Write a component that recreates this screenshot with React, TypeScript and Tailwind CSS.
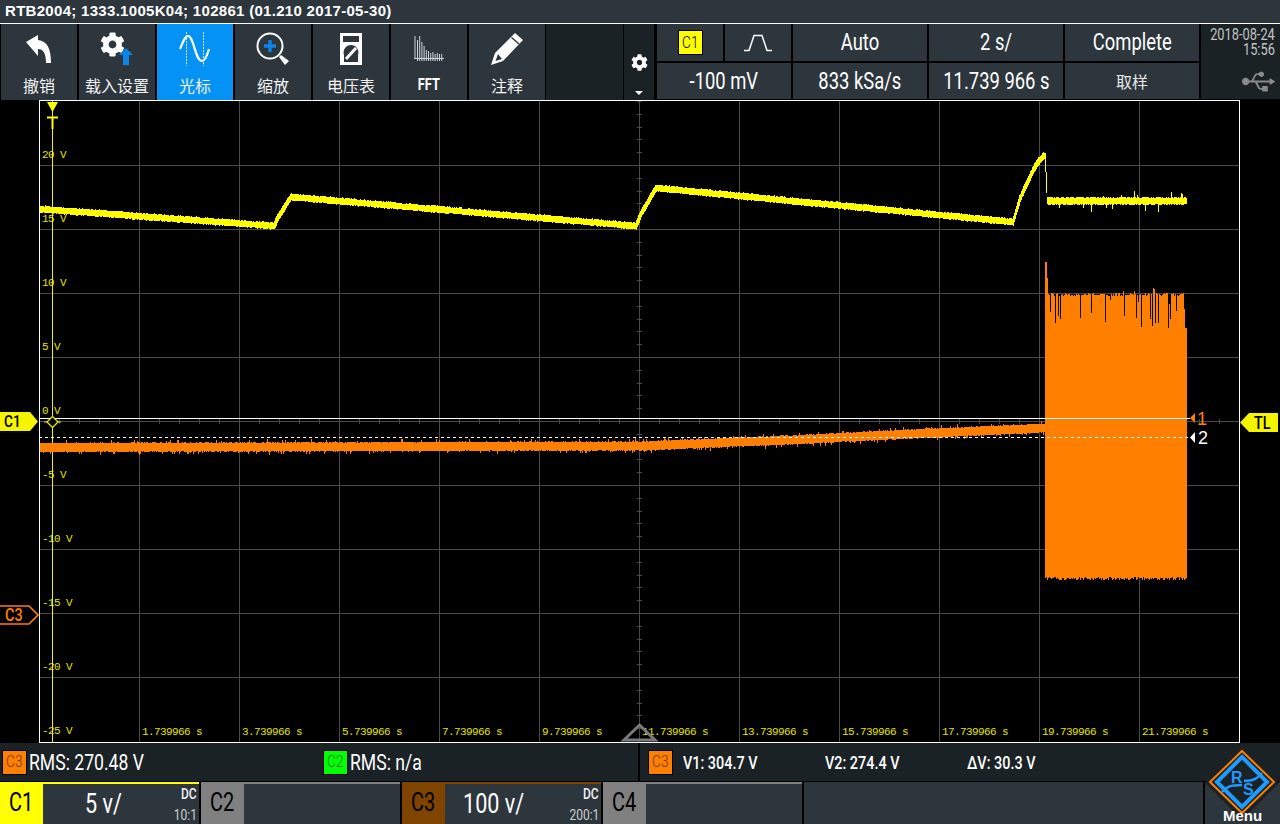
import type { ReactNode } from 'react';
import { FaCog, FaUsb } from 'react-icons/fa';

const SANS = "font-['Roboto',sans-serif]";
const CJK = "font-['Noto_Sans_CJK_SC','Noto_Sans',sans-serif]";

// small seeded generator so the noise is the same on every render
function makeRandom(seed: number) {
  let s = seed;
  return () => {
    s = (s * 1664525 + 1013904223) % 4294967296;
    return s / 4294967296;
  };
}

function lerp(points: number[][], x: number) {
  for (let i = 0; i < points.length - 1; i++) {
    const [x0, y0] = points[i];
    const [x1, y1] = points[i + 1];
    if (x >= x0 && x <= x1) return y0 + ((y1 - y0) * (x - x0)) / (x1 - x0);
  }
  return points[points.length - 1][1];
}

const yellowPoints = [
  [40, 209], [274, 226], [278, 218], [291, 197], [636, 226], [641, 214], [656, 188],
  [1013, 222], [1020, 199], [1030, 177], [1037, 163], [1044, 156],
];
const orangePoints = [[40, 447.5], [640, 446], [800, 439.5], [900, 434.5], [1045, 428]];

function yellowPath() {
  const rnd = makeRandom(7);
  let d = '';
  for (let x = 40; x < 1187; x++) {
    const a = lerp(yellowPoints, x);
    const b = lerp(yellowPoints, x + 1);
    let top = Math.min(a, b) - 2.7 - rnd() * 1.2;
    let bottom = Math.max(a, b) + 2.7 + rnd() * 1.2;
    if (x === 1045) {
      top = 153;
      bottom = 172;
    } else if (x === 1046) {
      top = 172;
      bottom = 193;
    } else if (x > 1046) {
      top = 198 - rnd() * 1.5;
      bottom = 204 + rnd() * 1.5;
      const r = rnd();
      if (r < 0.07) top -= 2 + rnd() * 5;
      else if (r < 0.12) bottom += 2 + rnd() * 5;
    }
    d += `M${x + 0.5} ${Math.round(top)}V${Math.round(bottom)}`;
  }
  return d;
}

function orangePath() {
  const rnd = makeRandom(21);
  let d = '';
  for (let x = 40; x < 1045; x++) {
    const y = lerp(orangePoints, x);
    let top = y - 4 - rnd();
    let bottom = y + 4 + rnd();
    const r = rnd();
    if (r < 0.08) top -= 1 + rnd() * 2;
    else if (r < 0.16) bottom += 1 + rnd() * 2;
    d += `M${x + 0.5} ${Math.round(top)}V${Math.round(bottom)}`;
  }
  for (let x = 1045; x < 1187; x++) {
    let top = 293 + rnd() * 3;
    const r = rnd();
    if (x < 1046.5) top = 262;
    else if (x < 1047.5) top = 278;
    else if (x >= 1185) top = 328;
    else if (r < 0.2) top = 300 + rnd() * 30;
    else if (r < 0.26) top = 285 + rnd() * 8;
    const bottom = 577 + rnd() * 3;
    d += `M${x + 0.5} ${Math.round(top)}V${Math.round(bottom)}`;
  }
  return d;
}

function Cond({ children, className = '' }: { children: ReactNode; className?: string }) {
  return <span className={`inline-block scale-x-[0.8] whitespace-nowrap ${SANS} ${className}`}>{children}</span>;
}

function UndoIcon() {
  return (
    <svg width="26" height="28" viewBox="0 0 26 28" fill="white">
      <path d="M0 7 12 0v5c9 1 13 8 13 23h-5c0-10-3-14-8-14v7z" />
    </svg>
  );
}

function LoadIcon() {
  return (
    <div className="relative w-[34px] h-[34px]">
      <FaCog className="absolute left-0 top-0 text-white" size={25} />
      <svg className="absolute left-[19px] top-[16px]" width="14" height="17" viewBox="0 0 14 17" fill="#0d84e8">
        <path d="M7 0 14 7H10V17H4V7H0z" />
      </svg>
    </div>
  );
}

function CursorIcon() {
  return (
    <svg width="32" height="34" viewBox="0 0 32 34" fill="none">
      <path d="M7.5 0V34M24.5 0V34" stroke="#d7e7f5" strokeWidth="1" strokeDasharray="2 1" />
      <path d="M1 17C4 10 6 4 9 4 15 4 16 29 23 29 26 29 28 24 30 17" stroke="white" strokeWidth="2.2" />
    </svg>
  );
}

function ZoomIcon() {
  return (
    <svg width="34" height="34" viewBox="0 0 34 34" fill="none">
      <circle cx="14" cy="14" r="12.5" stroke="white" strokeWidth="2" />
      <path d="M8 14H20M14 8V20" stroke="#0d84e8" strokeWidth="3.4" />
      <path d="M23 25 25 23 33 29 29 33z" fill="white" />
    </svg>
  );
}

function MeterIcon() {
  return (
    <svg width="22" height="32" viewBox="0 0 22 32">
      <path fillRule="evenodd" fill="white" d="M0 0H22V32H0zM3 3V9H19V3zM11 12a7.5 7.5 0 0 0-7 10v7h14v-7a7.5 7.5 0 0 0-7-10z" />
      <path d="M6 26 16 15" stroke="white" strokeWidth="3" />
    </svg>
  );
}

function FftIcon() {
  const bars = [18, 24, 16, 12, 8, 7, 5, 6, 4, 5, 4, 4];
  return (
    <svg width="30" height="26" viewBox="0 0 30 26" fill="none" stroke="#cfd4d6" strokeWidth="1">
      <path d="M1 0V22" />
      <path d="M0 22.5H30" />
      {bars.map((h, i) => (
        <path key={i} d={`M${3.5 + i * 2.2} ${22 - h}V25`} />
      ))}
    </svg>
  );
}

function PencilIcon() {
  return (
    <svg width="32" height="32" viewBox="0 0 32 32">
      <path fill="white" fillRule="evenodd" d="M24 0 32 7 12 28 0 32 4 20zM7 21 4.5 28 11 26z" />
      <path d="M20.5 4.5 28 11" stroke="#2d363d" strokeWidth="1.5" />
    </svg>
  );
}

function TrigIcon() {
  return (
    <svg width="30" height="18" viewBox="0 0 30 18" fill="none" stroke="white" strokeWidth="1.5">
      <path d="M1 16.5H6L11 1.5H19L24 16.5H29" />
    </svg>
  );
}

function Logo() {
  return (
    <svg className="absolute left-[1204px] top-[745px]" width="76" height="76" viewBox="0 0 76 76" fill="none">
      <path d="M38 1 75 38 38 75 1 38z" fill="#1b2226" />
      <path d="M38 6 70 37 38 68 6 37z" stroke="#ff7f00" strokeWidth="2" fill="#1b2226" />
      <path d="M38 12 63 37 38 62 13 37z" stroke="#1e9bff" strokeWidth="4" />
      <path d="M18 47C22 42 26 40 38 40M58 28C54 33 50 36 40 36" stroke="#1e9bff" strokeWidth="2.5" />
      <text x="27" y="38" fill="#1e9bff" fontSize="16" fontWeight="700" fontFamily="Liberation Sans">R</text>
      <text x="39" y="50" fill="#1e9bff" fontSize="16" fontWeight="700" fontFamily="Liberation Sans">S</text>
    </svg>
  );
}

const tools: { label: string; icon: ReactNode; active?: boolean; small?: boolean }[] = [
  { label: '撤销', icon: <UndoIcon /> },
  { label: '载入设置', icon: <LoadIcon /> },
  { label: '光标', icon: <CursorIcon />, active: true },
  { label: '缩放', icon: <ZoomIcon /> },
  { label: '电压表', icon: <MeterIcon /> },
  { label: 'FFT', icon: <FftIcon />, small: true },
  { label: '注释', icon: <PencilIcon /> },
];

function ToolButton({ label, icon, active, small }: (typeof tools)[number]) {
  return (
    <div className={`w-[76px] h-full flex flex-col items-center ${active ? 'bg-[#0592f5]' : 'bg-[#2d363d]'}`}>
      <div className="h-[50px] flex items-center justify-center">{icon}</div>
      <div className="h-[26px] -mt-px flex items-start justify-center">
        {small ? (
          <Cond className="text-[16px] font-bold text-white leading-[24px]">{label}</Cond>
        ) : (
          <span className={`${CJK} text-[16px] leading-[24px] text-[#f2f2f2] whitespace-nowrap`}>{label}</span>
        )}
      </div>
    </div>
  );
}

function ChannelBox({ name, className }: { name: string; className: string }) {
  return (
    <div className={`w-[25px] h-[25px] border border-black flex items-center justify-center ${className}`}>
      <Cond className="text-[17px] font-light">{name}</Cond>
    </div>
  );
}

function Cell({ className, children }: { className: string; children: ReactNode }) {
  return <div className={`bg-[#2d363d] flex items-center justify-center text-white ${className}`}>{children}</div>;
}

function ChannelTab({ name, labelBg, topBorder, value, ratio, valuePad = '' }: {
  name: string;
  labelBg: string;
  topBorder: string;
  value?: string;
  ratio?: string;
  valuePad?: string;
}) {
  return (
    <div className="h-[42px] w-[199px] flex flex-col">
      <div className={`h-[2px] ${topBorder}`} />
      <div className="flex-1 flex">
        <div className={`w-[43px] -mt-[2px] flex items-center justify-center text-black ${labelBg}`}>
          <Cond className="text-[25px]">{name}</Cond>
        </div>
        <div className="flex-1 bg-[#2d363d] flex">
          <div className={`flex-1 flex items-center text-white ${valuePad}`}>
            {value && <Cond className="text-[27px] origin-left">{value}</Cond>}
          </div>
          {ratio && (
            <div className="flex flex-col items-end justify-between pr-[2px] leading-none">
              <Cond className="text-[15px] font-medium text-[#f2f2f2] origin-right leading-[20px]">DC</Cond>
              <Cond className="text-[15px] text-[#cfcfcf] origin-right leading-[18px]">{ratio}</Cond>
            </div>
          )}
        </div>
      </div>
    </div>
  );
}

function Plot() {
  const vLines = Array.from({ length: 11 }, (_, i) => 139 + i * 100);
  const hLines = [165, 229, 293, 357, 421, 485, 549, 613, 677];
  const xTicks = Array.from({ length: 60 }, (_, i) => 39 + i * 20);
  const yTicks = Array.from({ length: 50 }, (_, i) => 101 + i * 12.8);
  const voltLabels = [20, 15, 10, 5, 0, -5, -10, -15, -20, -25];
  const timeLabels = Array.from({ length: 11 }, (_, i) => `${1 + i * 2}.739966 s`);

  return (
    <svg className="block" width="1201" height="643" viewBox="39 100 1201 643" fill="none">
      <g stroke="#4a4a4a" shapeRendering="crispEdges">
        {vLines.map((x) => (
          <path key={x} d={`M${x + 0.5} 100V742`} />
        ))}
        {hLines.map((y) => (
          <path key={y} d={`M39 ${y + 0.5}H1239`} />
        ))}
        {xTicks.map((x) => (
          <path key={x} d={`M${x + 0.5} 419V424`} />
        ))}
        {yTicks.map((y) => (
          <path key={y} d={`M637 ${Math.round(y) + 0.5}H642`} />
        ))}
      </g>

      <g fontFamily="Liberation Mono" fontSize="11" letterSpacing="-0.6" fill="#e4e400">
        {voltLabels.map((v, i) => (
          <text key={v} x={42} y={158 + i * 64}>{`${v} V`}</text>
        ))}
        {timeLabels.map((t, i) => (
          <text key={t} x={142 + i * 100} y={735}>{t}</text>
        ))}
      </g>

      <path d="M52.5 100V742" stroke="#f0f000" shapeRendering="crispEdges" />
      <path d={yellowPath()} stroke="#ffff00" shapeRendering="crispEdges" />
      <path d={orangePath()} stroke="#ff7f00" shapeRendering="crispEdges" />

      <path d="M39 418.5H1190" stroke="white" shapeRendering="crispEdges" />
      <path d="M39 437.5H1189" stroke="white" strokeDasharray="3 3" shapeRendering="crispEdges" />

      <path d="M47 102H58L52.5 112z" fill="#ffff00" />
      <path d="M47 117.5H58M52.5 117V129" stroke="#ffff00" strokeWidth="2" />
      <path d="M52.5 416.5 58 422 52.5 427.5 47 422z" stroke="#e8e800" strokeWidth="1.3" fill="#000" />
      <path d="M44 422H47M58 422H61" stroke="#e8e800" />

      <path d="M1195 413V423L1190 418z" fill="#ff7f00" />
      <text x="1197" y="425" fontFamily="Liberation Sans" fontSize="18" fill="#ff7f00">1</text>
      <path d="M1195 432V443L1190 437.5z" fill="white" />
      <text x="1198" y="444" fontFamily="Liberation Sans" fontSize="18" fill="white">2</text>

      <path d="M624 740 639.5 725 655 740z" stroke="#7a7a7a" strokeWidth="3" />

      <path d="M39.5 100.5H1239.5V742.5H39.5z" stroke="white" shapeRendering="crispEdges" />
    </svg>
  );
}

export default function App() {
  return (
    <div className="relative w-[1280px] h-[824px] overflow-hidden bg-black">
      {/* title bar */}
      <div className="h-[23px] bg-[#2d363d] flex items-center pl-[5px]">
        <span className="font-['Liberation_Sans',sans-serif] font-bold text-[15px] tracking-[0.3px] text-white whitespace-nowrap">
          RTB2004; 1333.1005K04; 102861 (01.210 2017-05-30)
        </span>
      </div>
      <div className="h-px bg-white" />

      {/* toolbar + acquisition panel */}
      <div className="h-[76px] flex">
        <div className="flex gap-[2px] pl-px h-full">
          {tools.map((t) => (
            <ToolButton key={t.label} {...t} />
          ))}
        </div>
        <div className="ml-[1px] w-[77px] bg-[#1b2226]" />
        <div className="ml-px w-[30px] bg-[#1b2226] flex flex-col items-center">
          <FaCog className="text-white mt-[30px]" size={17} />
          <svg className="mt-[20px]" width="8" height="4" viewBox="0 0 8 4" fill="white">
            <path d="M0 0H8L4 4z" />
          </svg>
        </div>
        <div className="ml-[3px] flex flex-col gap-[2px] w-[542px]">
          <div className="h-[37px] flex gap-[2px]">
            <Cell className="w-[66px]">
              <div className="w-[25px] h-[25px] bg-[#ffff00] border border-black flex items-center justify-center text-black">
                <Cond className="text-[17px] font-light">C1</Cond>
              </div>
            </Cell>
            <Cell className="w-[66px]"><TrigIcon /></Cell>
            <Cell className="w-[134px]"><Cond className="mt-[2px] text-[23px]">Auto</Cond></Cell>
            <Cell className="w-[134px]"><Cond className="mt-[2px] text-[23px]">2 s/</Cond></Cell>
            <Cell className="w-[134px]"><Cond className="mt-[2px] text-[23px]">Complete</Cond></Cell>
          </div>
          <div className="h-[36px] flex gap-[2px]">
            <Cell className="w-[134px]"><Cond className="mt-[2px] text-[23px]">-100 mV</Cond></Cell>
            <Cell className="w-[134px]"><Cond className="mt-[2px] text-[23px]">833 kSa/s</Cond></Cell>
            <Cell className="w-[134px]"><Cond className="mt-[2px] text-[23px]">11.739 966 s</Cond></Cell>
            <Cell className="w-[134px]"><span className={`${CJK} text-[16px] text-[#e8e8e8]`}>取样</span></Cell>
          </div>
        </div>
        <div className="ml-[2px] w-[79px] h-[75px] bg-[#1b2226] flex flex-col items-end pr-[5px] pt-[3px]">
          <Cond className="text-[16px] leading-[15px] text-[#c4c4c4] origin-right">2018-08-24</Cond>
          <Cond className="text-[16px] leading-[15px] text-[#c4c4c4] origin-right">15:56</Cond>
          <FaUsb className="text-[#8a8a8a] mt-[8px]" size={33} />
        </div>
      </div>

      {/* plot area */}
      <div className="h-[643px] pl-[39px]">
        <Plot />
      </div>

      {/* measurement strip */}
      <div className="h-[38px] bg-[#1b2226] flex items-center text-white">
        <div className="w-[323px] pl-[2px] flex items-center gap-[2px]">
          <ChannelBox name="C3" className="bg-[#ff7f00] text-[#6e3700]" />
          <Cond className="text-[22px] origin-left">RMS: 270.48 V</Cond>
        </div>
        <div className="w-[315px] flex items-center gap-[2px]">
          <ChannelBox name="C2" className="bg-[#00ff00] text-[#006600]" />
          <Cond className="text-[22px] origin-left">RMS: n/a</Cond>
        </div>
        <div className="w-[2px] h-full bg-black" />
        <div className="flex-1 pl-[8px] flex items-center">
          <ChannelBox name="C3" className="bg-[#ff7f00] text-[#6e3700]" />
          <Cond className="ml-[10px] w-[142px] text-[18px] font-medium origin-left">V1: 304.7 V</Cond>
          <Cond className="w-[142px] text-[18px] font-medium origin-left">V2: 274.4 V</Cond>
          <Cond className="text-[18px] font-medium origin-left">ΔV: 30.3 V</Cond>
        </div>
      </div>

      {/* channel row */}
      <div className="mt-px h-[42px] flex gap-[2px]">
        <ChannelTab name="C1" labelBg="bg-[#ffff00]" topBorder="bg-[#ffff00]" value="5 v/" ratio="10:1" valuePad="pl-[42px]" />
        <ChannelTab name="C2" labelBg="bg-[#808080]" topBorder="bg-[#808080]" />
        <ChannelTab name="C3" labelBg="bg-[#7f4400]" topBorder="bg-[#7f4400]" value="100 v/" ratio="200:1" valuePad="pl-[18px]" />
        <ChannelTab name="C4" labelBg="bg-[#808080]" topBorder="bg-[#808080]" />
        <div className="w-[399px] bg-[#2d363d]" />
        <div className="w-[75px] bg-[#2d363d] flex items-end justify-center">
          <span className="relative z-10 font-['Liberation_Sans',sans-serif] font-bold text-[15px] leading-[17px] text-white">Menu</span>
        </div>
      </div>

      {/* tags lying over the plot edge */}
      <div className="absolute left-0 top-[412px] h-[19px] w-[38px] pl-1 bg-[#f5f500] text-black leading-[19px] [clip-path:polygon(0_0,30px_0,38px_50%,30px_100%,0_100%)]">
        <Cond className="text-[17px] font-medium origin-left">C1</Cond>
      </div>
      <div className="absolute left-0 top-[605px] w-[39px] h-[20px]">
        <svg className="absolute inset-0" width="39" height="20" viewBox="0 0 39 20" fill="none">
          <path d="M-1 1H29L38 10 29 19H-1" stroke="#ff7f00" strokeWidth="1.6" />
        </svg>
        <Cond className="absolute left-[5px] top-0 text-[18px] font-medium leading-[20px] text-[#ff7f00] origin-left">C3</Cond>
      </div>
      <div className="absolute left-[1240px] top-[413px] w-[38px] h-[19px] pl-[14px] bg-[#f5f500] text-black leading-[19px] [clip-path:polygon(0_50%,9px_0,38px_0,38px_100%,9px_100%)]">
        <Cond className="text-[18px] font-medium origin-left">TL</Cond>
      </div>
      <Logo />
    </div>
  );
}
